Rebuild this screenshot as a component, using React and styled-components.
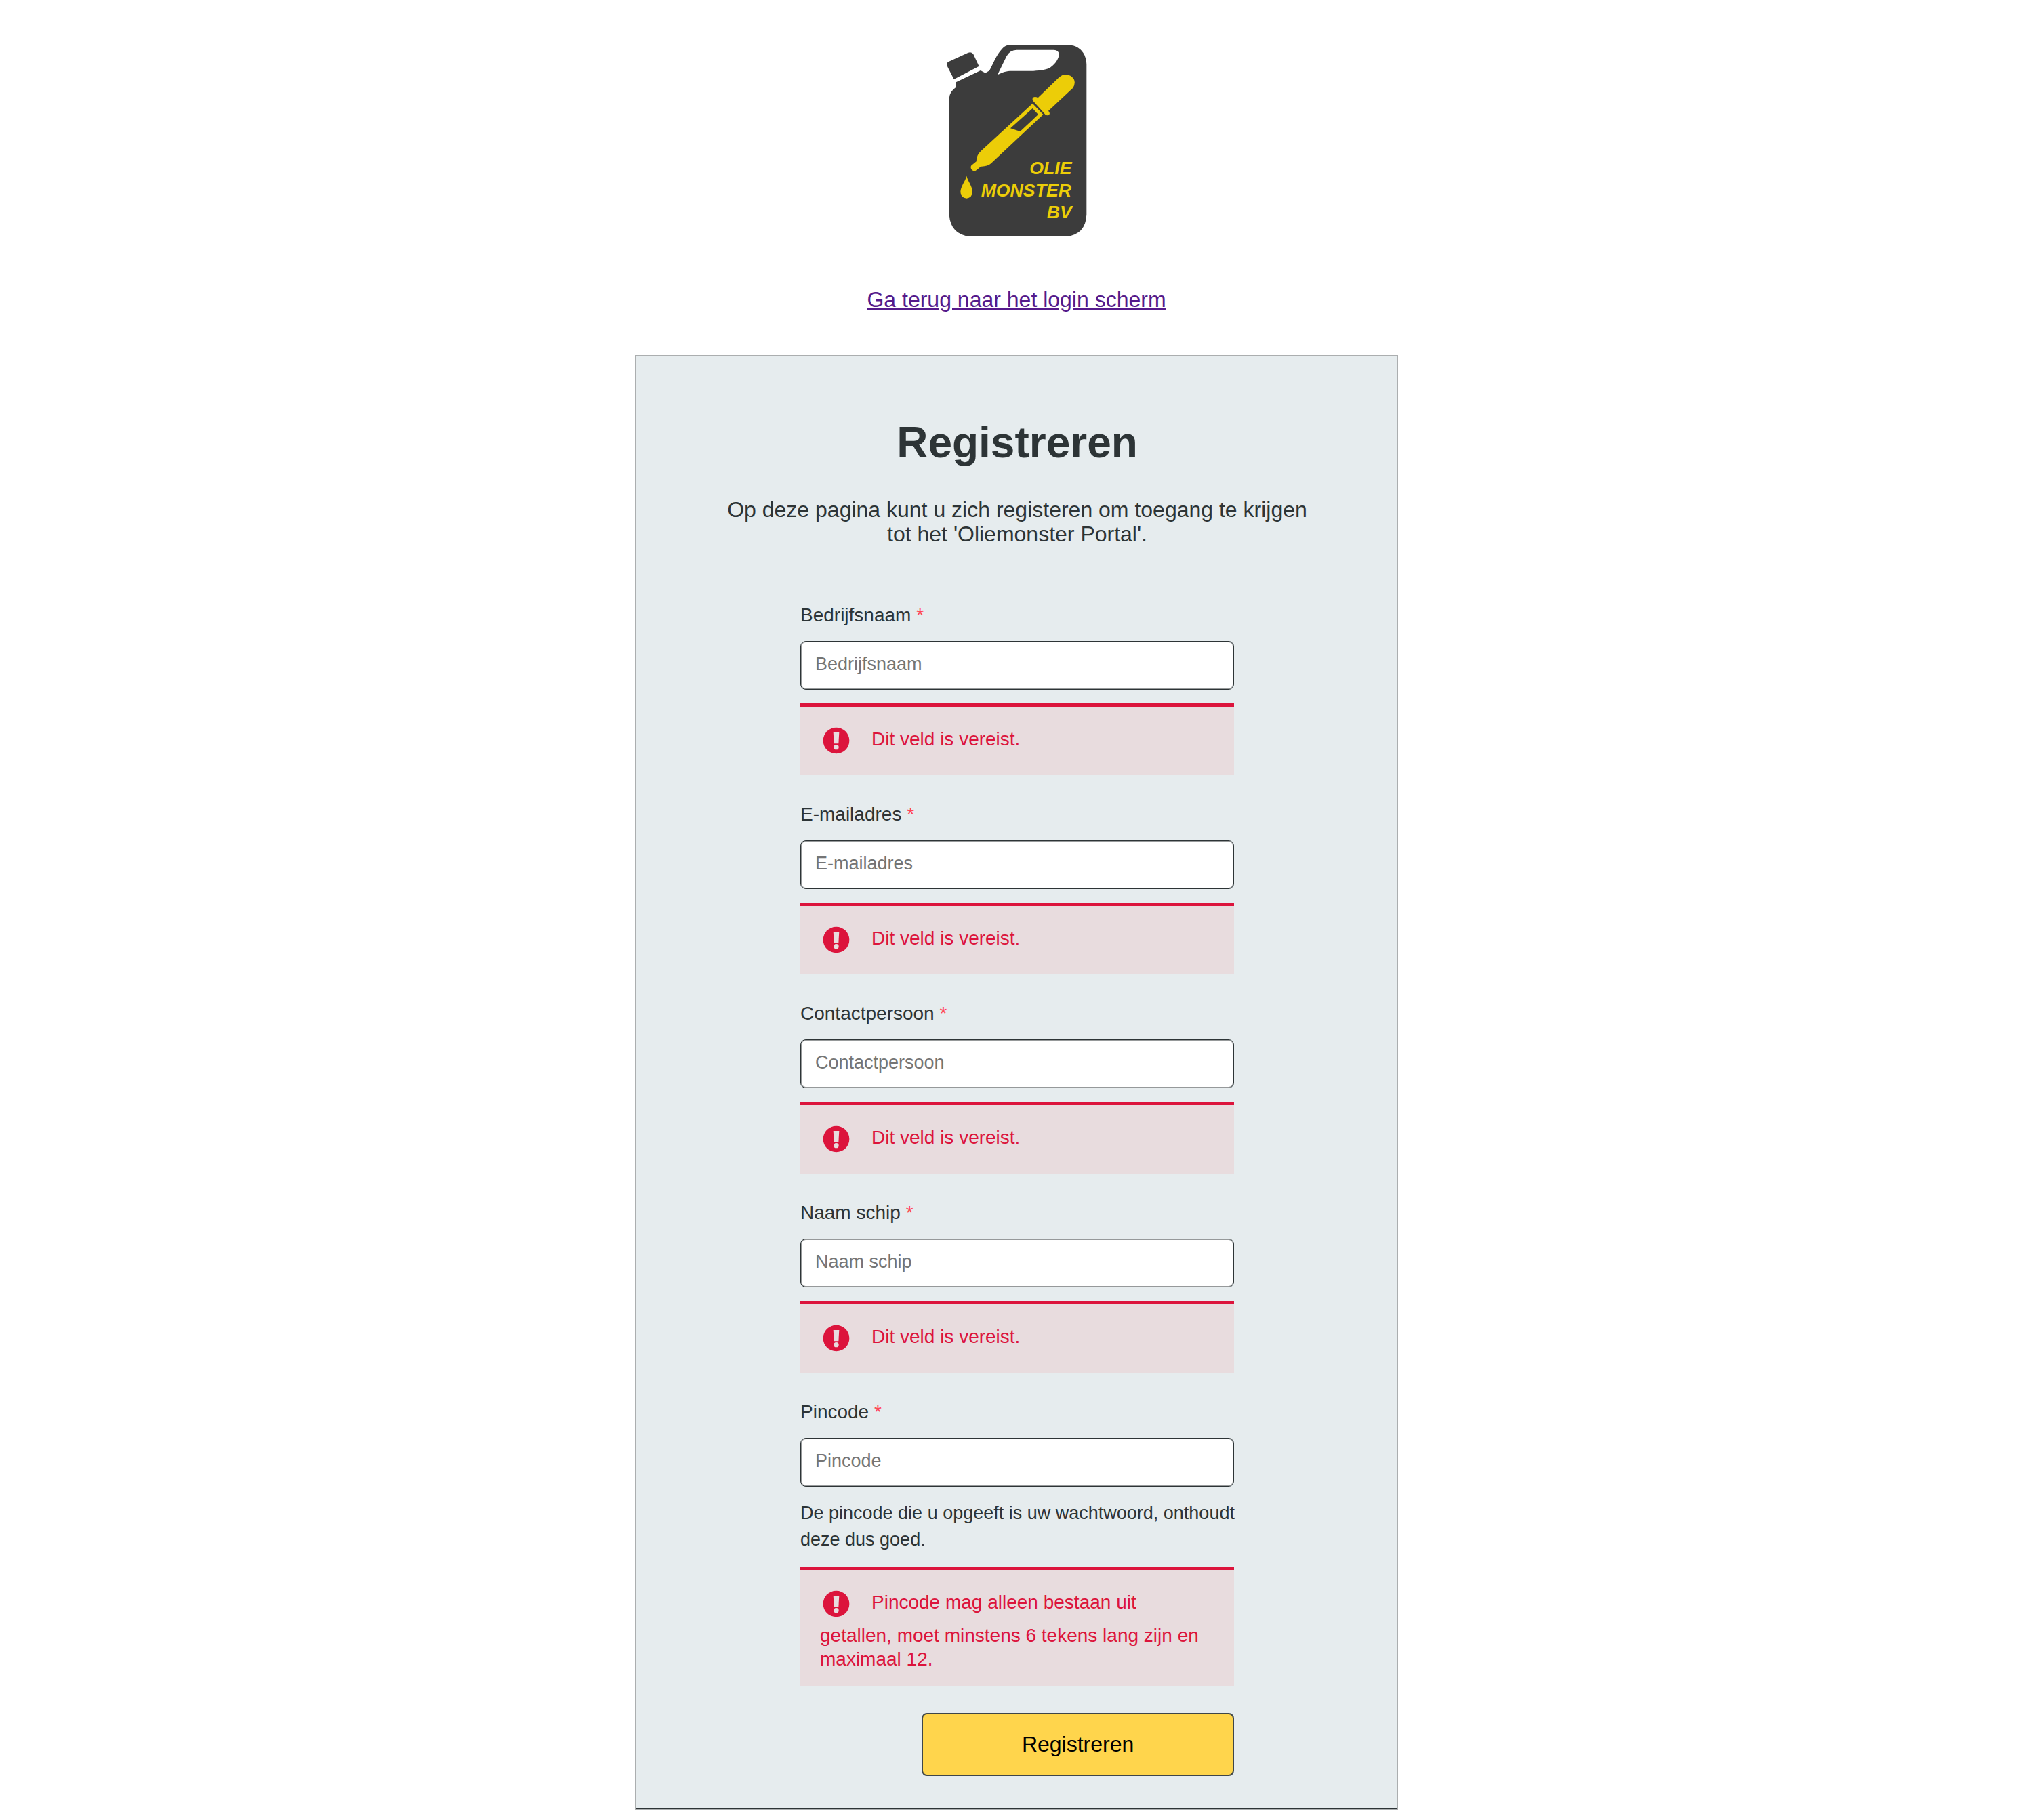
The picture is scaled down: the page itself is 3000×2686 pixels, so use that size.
import React from "react";
import styled, { createGlobalStyle } from "styled-components";

const ink = "#2d3436";
const danger = "#dc143c";

const GlobalStyle = createGlobalStyle`
  *, *::before, *::after { box-sizing: border-box; }
  body {
    margin: 0;
    background: #ffffff;
    color: ${ink};
    font-family: "Liberation Sans", Arial, sans-serif;
    font-size: 32px;
    line-height: 36px;
  }
`;

const Page = styled.div`
  display: flex;
  flex-direction: column;
  align-items: center;
  padding: 50px 16px 16px;
`;

const LogoImage = styled.svg`
  display: block;
  width: 240px;
  height: 310px;
`;

const BackLink = styled.a`
  margin: 64px 0 65px;
  color: #551a8b;
  text-decoration: underline;
`;

const Card = styled.main`
  display: flex;
  flex-direction: column;
  align-items: center;
  width: 100%;
  max-width: 1124px;
  padding: 90px 120px 48px 122px;
  background: #e6ecee;
  border: 1px solid ${ink};
  box-shadow: 0 0 0 1px rgba(45, 52, 54, 0.4);
`;

const Title = styled.h1`
  margin: 0;
  font-size: 64px;
  line-height: 74px;
  font-weight: 700;
`;

const Intro = styled.p`
  margin: 44px 0 84px;
  text-align: center;
`;

const Form = styled.form`
  display: flex;
  flex-direction: column;
  width: 100%;
  max-width: 640px;
`;

const FieldGroup = styled.div`
  display: flex;
  flex-direction: column;
  margin-bottom: 40px;
`;

const Label = styled.label`
  margin-bottom: 20px;
  font-size: 28px;
  line-height: 36px;
`;

const Required = styled.span`
  color: #ff4757;
`;

const Input = styled.input`
  width: 100%;
  height: 72px;
  margin-bottom: 20px;
  padding: 0 21px 4px;
  border: 1px solid ${ink};
  border-radius: 8px;
  box-shadow: inset 0 0 0 1px rgba(45, 52, 54, 0.5);
  background: #ffffff;
  color: ${ink};
  font-family: inherit;
  font-size: 27px;

  &::placeholder {
    color: #757575;
    opacity: 1;
  }
`;

const Hint = styled.p`
  margin: 0 -4px 20px 0;
  font-size: 27px;
  line-height: 39px;
`;

const ErrorBox = styled.div`
  padding: 21px 40px 22px 29px;
  border-top: 5px solid ${danger};
  background: #e8dcde;
  color: ${danger};
  font-size: 28px;
  line-height: 35px;
`;

const ErrorIcon = styled.svg`
  width: 48px;
  height: 48px;
  margin: 5px 28px 5px 0;
  vertical-align: -22px;
`;

const SubmitButton = styled.button`
  align-self: flex-end;
  width: 72%;
  height: 93px;
  border: 2px solid #3f4648;
  border-radius: 8px;
  background: #ffd54c;
  color: #000000;
  font-family: inherit;
  font-size: 32px;
  cursor: pointer;
`;

function Logo() {
  return (
    <LogoImage viewBox="0 0 720 930" role="img" aria-label="Olie Monster BV">
      <g fill="#3c3c3c">
        <path d="M52 140 Q50 129 58 124 L145 84 Q161 77 169 90 L194 143 L83 201 Z" />
        <path
          fillRule="evenodd"
          d="M92 214 L201 162 L222 173 L240 163 C257 133 268 96 297 65 Q311 49 335 49 H590 Q640 52 661 94 Q670 112 670 134 V800 Q666 888 580 897 H155 Q68 888 62 800 V285 Q64 256 90 238 Z M276 181 C301 168 315 164 340 164 H435 C470 162 495 158 511 148 C532 134 548 108 548 91 Q547 71 526 71 H360 Q330 72 316 99 Z"
        />
      </g>
      <g fill="#eccd08">
        <path d="M455 283 L548 193 Q572 171 600 186 Q629 207 610 239 L501 341 Q510 350 505 357 Q497 364 488 358 L433 296 Q428 287 434 281 Q443 276 455 283 Z" />
        <path
          fillRule="evenodd"
          d="M431 308 L478 357 L247 574 Q230 588 202 587 L184 602 Q174 611 163 603 Q154 593 160 583 L183 564 Q180 540 203 518 Z M431 330 L333 418 L376 432 L456 357 Z"
        />
        <path d="M139 629 C146 655 165 674 165 700 Q163 727 139 728 Q113 726 112 700 C113 674 132 655 139 629 Z" />
        <g
          fontFamily="Liberation Sans, Arial, sans-serif"
          fontSize="80"
          fontWeight="700"
          fontStyle="italic"
        >
          <text x="418" y="622">OLIE</text>
          <text x="203" y="719">MONSTER</text>
          <text x="494" y="817">BV</text>
        </g>
      </g>
    </LogoImage>
  );
}

function ErrorMessage({ id, children }) {
  return (
    <ErrorBox id={id} role="alert">
      <ErrorIcon viewBox="0 0 144 144" aria-hidden="true">
        <circle cx="72" cy="72" r="58" fill={danger} />
        <path d="M59 36 H85 L82 85 H62 Z" fill="#e8dcde" />
        <circle cx="72" cy="101" r="11" fill="#e8dcde" />
      </ErrorIcon>
      {children}
    </ErrorBox>
  );
}

function Field({ id, label, type = "text", hint, error }) {
  return (
    <FieldGroup>
      <Label htmlFor={id}>
        {label} <Required>*</Required>
      </Label>
      <Input
        id={id}
        name={id}
        type={type}
        placeholder={label}
        aria-invalid="true"
        aria-describedby={`${id}-error`}
      />
      {hint && <Hint>{hint}</Hint>}
      <ErrorMessage id={`${id}-error`}>{error}</ErrorMessage>
    </FieldGroup>
  );
}

const required = "Dit veld is vereist.";

const fields = [
  { id: "company", label: "Bedrijfsnaam", error: required },
  { id: "email", label: "E-mailadres", type: "email", error: required },
  { id: "contact", label: "Contactpersoon", error: required },
  { id: "ship", label: "Naam schip", error: required },
  {
    id: "pin",
    label: "Pincode",
    type: "password",
    hint: "De pincode die u opgeeft is uw wachtwoord, onthoudt deze dus goed.",
    error:
      "Pincode mag alleen bestaan uit getallen, moet minstens 6 tekens lang zijn en maximaal 12.",
  },
];

export default function App() {
  return (
    <>
      <GlobalStyle />
      <Page>
        <Logo />
        <BackLink href="#login">Ga terug naar het login scherm</BackLink>
        <Card>
          <Title>Registreren</Title>
          <Intro>
            Op deze pagina kunt u zich registeren om toegang te krijgen tot het
            'Oliemonster Portal'.
          </Intro>
          <Form noValidate onSubmit={(event) => event.preventDefault()}>
            {fields.map((field) => (
              <Field key={field.id} {...field} />
            ))}
            <SubmitButton type="submit">Registreren</SubmitButton>
          </Form>
        </Card>
      </Page>
    </>
  );
}
